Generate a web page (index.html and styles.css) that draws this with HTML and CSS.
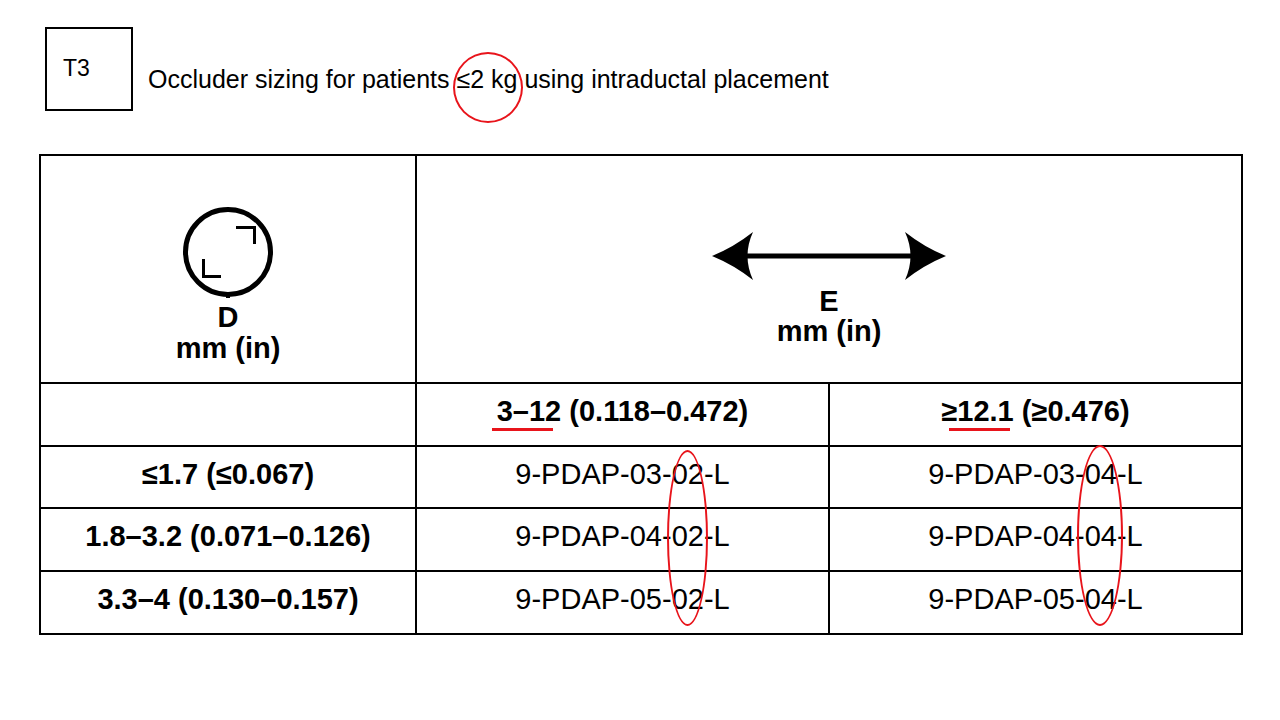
FILE: index.html
```html
<!DOCTYPE html>
<html lang="en">
<head>
<meta charset="utf-8">
<title>T3 Occluder sizing</title>
<link rel="stylesheet" href="styles.css">
</head>
<body>
<div class="page">
  <div class="caption">
    <div class="tag">T3</div>
    <p class="title">Occluder sizing for patients <span class="mark">≤2 kg</span> using intraductal placement</p>
  </div>

  <div class="table-wrap">
    <table class="sizing">
      <colgroup>
        <col class="c1">
        <col class="c2">
        <col class="c3">
      </colgroup>
      <tr class="r-head">
        <td class="head-d">
          <svg class="icon-d" width="100" height="100" viewBox="0 0 100 100" aria-hidden="true">
            <circle cx="50" cy="50" r="42.5" fill="none" stroke="#000" stroke-width="5"/>
            <rect x="48" y="92" width="4" height="4" fill="#000"/>
            <path d="M58 25.5 H76.5 V42" fill="none" stroke="#000" stroke-width="3"/>
            <path d="M25.5 57 V74.5 H43" fill="none" stroke="#000" stroke-width="3"/>
          </svg>
          <div class="lbl">D</div>
          <div class="lbl">mm (in)</div>
        </td>
        <td class="head-e" colspan="2">
          <svg class="icon-e" width="252" height="60" viewBox="0 0 252 60" aria-hidden="true">
            <line x1="40" y1="30" x2="212" y2="30" stroke="#000" stroke-width="5"/>
            <path d="M9 30 Q31 21 50 6 Q39 30 50 54 Q31 39 9 30 Z" fill="#000"/>
            <path d="M243 30 Q221 21 202 6 Q213 30 202 54 Q221 39 243 30 Z" fill="#000"/>
          </svg>
          <div class="lbl">E</div>
          <div class="lbl">mm (in)</div>
        </td>
      </tr>
      <tr class="r-sub">
        <td></td>
        <td class="b"><span class="ul ul-a">3–12</span> (0.118–0.472)</td>
        <td class="b"><span class="ul ul-b">≥12.1</span> (≥0.476)</td>
      </tr>
      <tr class="r-a">
        <td class="b">≤1.7 (≤0.067)</td>
        <td>9-PDAP-03-02-L</td>
        <td>9-PDAP-03-04-L</td>
      </tr>
      <tr class="r-b">
        <td class="b">1.8–3.2 (0.071–0.126)</td>
        <td>9-PDAP-04-02-L</td>
        <td>9-PDAP-04-04-L</td>
      </tr>
      <tr class="r-c">
        <td class="b">3.3–4 (0.130–0.157)</td>
        <td>9-PDAP-05-02-L</td>
        <td>9-PDAP-05-04-L</td>
      </tr>
    </table>
    <div class="oval oval-a"></div>
    <div class="oval oval-b"></div>
  </div>
</div>
</body>
</html>
```

FILE: styles.css
```css
html, body {
  margin: 0;
  padding: 0;
  background: #fff;
}

body {
  font-family: "Liberation Sans", Arial, sans-serif;
  color: #000;
  width: 1280px;
  height: 720px;
  overflow: hidden;
}

.page {
  padding-top: 27px;
}

.caption {
  display: flex;
  align-items: flex-start;
  margin-left: 45px;
}

.tag {
  box-sizing: border-box;
  width: 88px;
  height: 84px;
  border: 2px solid #000;
  font-size: 23px;
  line-height: 23px;
  padding: 28px 0 0 16px;
}

.title {
  margin: 38px 0 0 15px;
  font-size: 25px;
  line-height: 29px;
}

.mark {
  position: relative;
}

.mark::after {
  content: "";
  position: absolute;
  left: -3px;
  top: -13px;
  width: 66px;
  height: 67px;
  border: 2px solid #e8141b;
  border-radius: 50%;
}

.table-wrap {
  position: relative;
  margin: 43px 0 0 39px;
  width: 1202px;
}

.sizing {
  border-collapse: collapse;
  table-layout: fixed;
  width: 1202px;
  font-size: 29px;
}

.c1 { width: 376px; }
.c2 { width: 413px; }
.c3 { width: 413px; }

.sizing td {
  border: 2px solid #000;
  text-align: center;
  vertical-align: middle;
  padding: 0 0 6px 0;
  white-space: nowrap;
}

.sizing td.b {
  font-weight: bold;
}

.r-head { height: 228px; }
.r-sub { height: 63px; }
.r-a { height: 62px; }
.r-b { height: 63px; }
.r-c { height: 63px; }

.sizing td.head-d,
.sizing td.head-e {
  vertical-align: top;
  font-weight: bold;
  padding-bottom: 0;
}

.sizing td.head-d { padding-top: 46px; }
.sizing td.head-e { padding-top: 70px; }

.icon-d,
.icon-e {
  display: block;
  margin: 0 auto;
}

.lbl {
  line-height: 30px;
  font-size: 29px;
}

.head-d .lbl:last-child {
  margin-top: 1px;
}

.ul {
  position: relative;
}

.ul::after {
  content: "";
  position: absolute;
  bottom: -4px;
  height: 3px;
  background: #e8141b;
}

.ul-a::after { left: -5px; right: 8px; }
.ul-b::after { left: 8px; right: 4px; }

.oval {
  position: absolute;
  border: 2px solid #e8141b;
  border-radius: 50%;
  box-sizing: border-box;
}

.oval-a {
  left: 628px;
  top: 296px;
  width: 41px;
  height: 176px;
}

.oval-b {
  left: 1038px;
  top: 291px;
  width: 46px;
  height: 181px;
}
```
